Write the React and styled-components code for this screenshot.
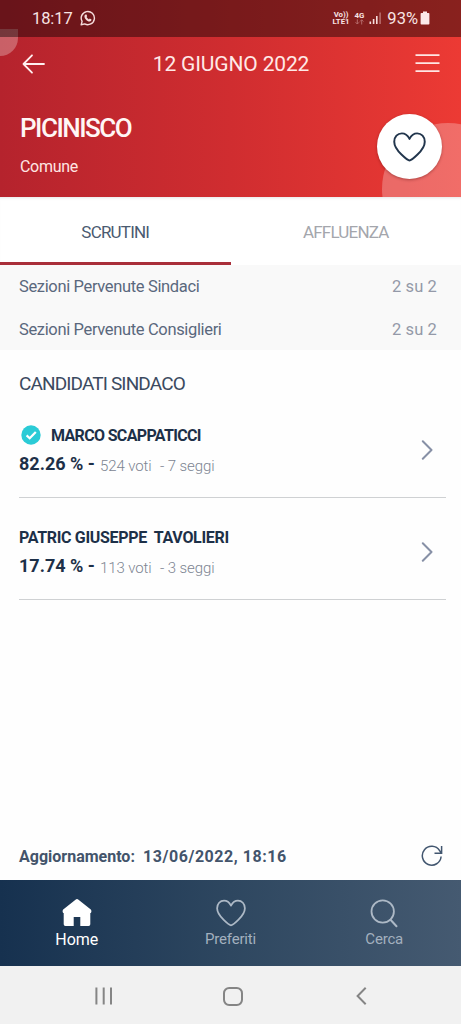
import React from "react";
import styled, { createGlobalStyle } from "styled-components";

const candidates = [
  {
    name: "MARCO SCAPPATICCI",
    percent: "82.26 % -",
    votes: "524 voti",
    seats: "- 7 seggi",
    elected: true,
  },
  {
    name: "PATRIC GIUSEPPE  TAVOLIERI",
    percent: "17.74 % -",
    votes: "113 voti",
    seats: "- 3 seggi",
    elected: false,
  },
];

const sections = [
  { label: "Sezioni Pervenute Sindaci", value: "2 su 2" },
  { label: "Sezioni Pervenute Consiglieri", value: "2 su 2" },
];

const HeartIcon = ({ width, height, stroke }) => (
  <svg width={width} height={height} viewBox="0 0 32 29" fill="none">
    <path
      d="M16 27.6C15 27.6 1.2 18.2 1.2 9.4C1.2 4.6 4.4 1.3 8.6 1.3C12 1.3 14.2 3.2 16 6.6C17.8 3.2 20 1.3 23.4 1.3C27.6 1.3 30.8 4.6 30.8 9.4C30.8 18.2 17 27.6 16 27.6Z"
      stroke={stroke}
      strokeWidth="1.9"
      strokeLinejoin="round"
    />
  </svg>
);

const WhatsappIcon = () => (
  <svg width="16" height="16" viewBox="0 0 16 16" fill="none">
    <path
      d="M1.2 14.8L2.1 11.4A6.6 6.6 0 1 1 4.7 13.9Z"
      stroke="#f6dcdc"
      strokeWidth="1.4"
      strokeLinejoin="round"
    />
    <path
      d="M5.5 4.4L6.5 4.5L7.2 6.2L6.5 7.1C7 8.1 7.8 8.9 8.9 9.4L9.8 8.6L11.5 9.5C11.5 10.8 10.6 11.6 9.5 11.5C7 11.2 4.6 8.7 4.4 6.4C4.4 5.5 4.8 4.8 5.5 4.4Z"
      fill="#f6dcdc"
    />
  </svg>
);

const SignalIcon = () => (
  <svg width="13" height="13" viewBox="0 0 13 13">
    <rect x="0.5" y="9.5" width="1.6" height="2.5" fill="#f6dcdc" />
    <rect x="3.8" y="7" width="1.6" height="5" fill="#f6dcdc" />
    <rect x="7" y="4" width="1.6" height="8" fill="#f6dcdc" />
    <rect x="10.3" y="0.5" width="1.6" height="11.5" fill="#b66c6c" />
  </svg>
);

const BatteryIcon = () => (
  <svg width="10" height="14" viewBox="0 0 10 14" fill="#fbeaea">
    <rect x="3" y="0.5" width="4" height="2" />
    <rect x="0.6" y="2" width="8.8" height="11.5" rx="0.8" />
  </svg>
);

const ArrowsIcon = () => (
  <svg width="9" height="6" viewBox="0 0 9 6" fill="none" stroke="#b66c6c">
    <path d="M2.3 0.3V5M0.6 3.3L2.3 5L4 3.3M6.7 5.5V0.8M5 2.5L6.7 0.8L8.4 2.5" />
  </svg>
);

const BackIcon = () => (
  <svg width="24" height="20" viewBox="0 0 24 20" fill="none">
    <path
      d="M10 1.3L1.5 10L10 18.7M1.5 10H22"
      stroke="#fff0f0"
      strokeWidth="1.8"
      strokeLinecap="round"
      strokeLinejoin="round"
    />
  </svg>
);

const MenuIcon = () => (
  <svg width="25" height="20" viewBox="0 0 25 20">
    <path d="M0.5 1.2H24.5M0.5 9.2H24.5M0.5 17.2H24.5" stroke="#ffe6e4" strokeWidth="1.8" />
  </svg>
);

const CheckIcon = () => (
  <svg width="20" height="20" viewBox="0 0 20 20" fill="none">
    <circle cx="10" cy="10" r="9.7" fill="#2bcbd6" />
    <path d="M5.6 10.4L8.7 13.3L14.8 6.9" stroke="#fff" strokeWidth="2.2" />
  </svg>
);

const ChevronIcon = () => (
  <svg width="12" height="20" viewBox="0 0 12 20" fill="none">
    <path
      d="M1.8 1.3L10.5 10L1.8 18.7"
      stroke="#8790a6"
      strokeWidth="2"
      strokeLinecap="round"
      strokeLinejoin="round"
    />
  </svg>
);

const RefreshIcon = () => (
  <svg width="22" height="22" viewBox="0 0 22 22" fill="none">
    <path
      d="M20.1 11.5A9.4 9.4 0 1 1 18.6 5.6L20.3 8.2M20.6 1V8.3H13.5"
      stroke="#42566f"
      strokeWidth="1.5"
    />
  </svg>
);

const HomeIcon = () => (
  <svg width="30" height="28" viewBox="0 0 30 28" fill="#fff">
    <path d="M13.5 0.7Q15 -0.5 16.5 0.7L28.8 10.5Q30 12 28.8 14H28.3V25.3Q28.3 27 26.6 27H18.3V18H11.7V27H3.4Q1.7 27 1.7 25.3V14H1.2Q0 12 1.2 10.5Z" />
  </svg>
);

const SearchIcon = () => (
  <svg width="28" height="29" viewBox="0 0 28 29" fill="none">
    <circle cx="12.7" cy="12.5" r="11.2" stroke="#adb9c6" strokeWidth="1.8" />
    <path d="M20.5 20.7L26.5 27.2" stroke="#adb9c6" strokeWidth="2" strokeLinecap="round" />
  </svg>
);

const RecentsIcon = () => (
  <svg width="18" height="18" viewBox="0 0 18 18">
    <path d="M1.4 0.5V17.5M8.7 0.5V17.5M16 0.5V17.5" stroke="#858585" strokeWidth="2" />
  </svg>
);

const CircleHomeIcon = () => (
  <svg width="20" height="19" viewBox="0 0 20 19" fill="none">
    <rect x="1" y="1" width="18" height="17" rx="5.2" stroke="#858585" strokeWidth="2" />
  </svg>
);

const NavBackIcon = () => (
  <svg width="11" height="18" viewBox="0 0 11 18" fill="none">
    <path d="M9.7 0.8L1.6 9L9.7 17.2" stroke="#858585" strokeWidth="2" />
  </svg>
);

const App = () => {
  return (
    <Screen>
      <GlobalStyle />
      <Header>
        <CornerShape />
        <BigCircle />
        <StatusBar>
          <Clock>18:17</Clock>
          <WhatsappIcon />
          <StatusRight>
            <Network>
              <span>Vo))</span>
              <span>LTE1</span>
            </Network>
            <Network>
              <span>4G</span>
              <ArrowsIcon />
            </Network>
            <SignalIcon />
            <Battery>
              93%
              <BatteryIcon />
            </Battery>
          </StatusRight>
        </StatusBar>
        <TitleBar>
          <BackIcon />
          <Title>12 GIUGNO 2022</Title>
          <MenuIcon />
        </TitleBar>
        <Place>
          <div>
            <Town>PICINISCO</Town>
            <Kind>Comune</Kind>
          </div>
          <Favourite>
            <HeartIcon width={33} height={30} stroke="#22364d" />
          </Favourite>
        </Place>
      </Header>
      <Tabs>
        <Tab $active>SCRUTINI</Tab>
        <Tab>AFFLUENZA</Tab>
      </Tabs>
      <Sections>
        {sections.map((section) => (
          <SectionRow key={section.label}>
            <span>{section.label}</span>
            <SectionValue>{section.value}</SectionValue>
          </SectionRow>
        ))}
      </Sections>
      <Content>
        <Heading>CANDIDATI SINDACO</Heading>
        {candidates.map((candidate) => (
          <Candidate key={candidate.name}>
            <div>
              <Name $elected={candidate.elected}>
                {candidate.elected && <CheckIcon />}
                {candidate.name}
              </Name>
              <Result>
                <Percent>{candidate.percent}</Percent>
                <Votes>{candidate.votes}</Votes>
                <Seats>{candidate.seats}</Seats>
              </Result>
            </div>
            <ChevronIcon />
          </Candidate>
        ))}
      </Content>
      <Update>
        <UpdateLabel>Aggiornamento:</UpdateLabel>
        <UpdateTime>13/06/2022, 18:16</UpdateTime>
        <RefreshIcon />
      </Update>
      <Footer>
        <FooterItem $active>
          <FooterIcon>
            <HomeIcon />
          </FooterIcon>
          Home
        </FooterItem>
        <FooterItem>
          <FooterIcon>
            <HeartIcon width={30} height={28} stroke="#adb9c6" />
          </FooterIcon>
          Preferiti
        </FooterItem>
        <FooterItem>
          <FooterIcon>
            <SearchIcon />
          </FooterIcon>
          Cerca
        </FooterItem>
      </Footer>
      <SystemNav>
        <RecentsIcon />
        <CircleHomeIcon />
        <NavBackIcon />
      </SystemNav>
    </Screen>
  );
};

export default App;

const GlobalStyle = createGlobalStyle`
  * {
    box-sizing: border-box;
  }
  body {
    margin: 0;
    background: #fff;
  }
  svg {
    display: block;
    flex-shrink: 0;
  }
`;

const Screen = styled.div`
  display: flex;
  flex-direction: column;
  width: 461px;
  height: 1024px;
  overflow: hidden;
  background: #fefefe;
  font-family: Roboto, "Liberation Sans", sans-serif;
`;

const Header = styled.header`
  position: relative;
  height: 197px;
  flex-shrink: 0;
  overflow: hidden;
  background: linear-gradient(90deg, #b5232d 0%, #d02d30 50%, #ec3a34 100%);
`;

const CornerShape = styled.div`
  position: absolute;
  top: 29px;
  left: 0;
  width: 18px;
  height: 27px;
  border-radius: 0 0 18px 0;
  background: rgba(255, 255, 255, 0.28);
`;

const BigCircle = styled.div`
  position: absolute;
  top: 123px;
  left: 382px;
  width: 132px;
  height: 132px;
  border-radius: 50%;
  background: rgba(255, 255, 255, 0.26);
`;

const StatusBar = styled.div`
  position: relative;
  display: flex;
  align-items: center;
  gap: 7px;
  height: 37px;
  padding: 0 31px 1px 32px;
  background: rgba(0, 0, 0, 0.42);
  color: #f8e4e4;
`;

const Clock = styled.span`
  font-size: 16.5px;
  letter-spacing: -0.1px;
`;

const StatusRight = styled.div`
  display: flex;
  align-items: center;
  gap: 5px;
  margin-left: auto;
`;

const Network = styled.div`
  display: flex;
  flex-direction: column;
  align-items: center;
  font-size: 7.8px;
  font-weight: 700;
  line-height: 7px;
`;

const Battery = styled.div`
  display: flex;
  align-items: center;
  gap: 2px;
  font-size: 16.5px;
`;

const TitleBar = styled.div`
  position: relative;
  display: flex;
  align-items: center;
  justify-content: space-between;
  height: 53px;
  padding: 0 21px 0 22px;
`;

const Title = styled.h1`
  margin: 0;
  padding-left: 1px;
  font-size: 21px;
  font-weight: 400;
  letter-spacing: -0.15px;
  color: #ffe9e7;
`;

const Place = styled.div`
  position: relative;
  display: flex;
  justify-content: space-between;
  padding: 24px 19px 0 20px;
`;

const Town = styled.h2`
  margin: 0;
  font-size: 26px;
  font-weight: 500;
  line-height: 29px;
  letter-spacing: -1.5px;
  color: #fff6f5;
`;

const Kind = styled.p`
  margin: 14px 0 0;
  font-size: 16px;
  line-height: 20px;
  letter-spacing: -0.3px;
  color: #ffe5e3;
`;

const Favourite = styled.button`
  display: grid;
  place-items: center;
  width: 65px;
  height: 65px;
  padding: 0;
  border: 0;
  border-radius: 50%;
  background: #fff;
  box-shadow: 0 1px 3px rgba(60, 0, 0, 0.35);
`;

const Tabs = styled.div`
  display: flex;
  height: 68px;
  flex-shrink: 0;
  background: #fff;
  box-shadow: inset 0 3px 3px -2px rgba(0, 0, 0, 0.1);
`;

const Tab = styled.div`
  display: grid;
  place-items: center;
  flex: 1;
  padding-top: 4px;
  border-bottom: 3px solid ${(props) => (props.$active ? "#a92f3a" : "#fff")};
  font-size: 17px;
  letter-spacing: -0.8px;
  color: ${(props) => (props.$active ? "#4a5a70" : "#a4a6ac")};
`;

const Sections = styled.div`
  height: 85px;
  flex-shrink: 0;
  background: #f9f9f9;
`;

const SectionRow = styled.div`
  display: flex;
  align-items: center;
  justify-content: space-between;
  height: 43px;
  padding: 0 24px 0 19px;
  font-size: 16.5px;
  letter-spacing: -0.35px;
  color: #5a687d;
`;

const SectionValue = styled.span`
  letter-spacing: 0.1px;
  color: #9499a8;
`;

const Content = styled.main`
  display: flex;
  flex-direction: column;
  flex: 1;
  padding: 22px 15px 0 19px;
`;

const Heading = styled.h3`
  margin: 0;
  font-size: 19px;
  font-weight: 400;
  line-height: 24px;
  letter-spacing: -0.87px;
  color: #3b4a60;
`;

const Candidate = styled.div`
  display: flex;
  align-items: center;
  justify-content: space-between;
  height: 102px;
  padding: 6px 13px 0 0;
  border-bottom: 1px solid #cfd1d3;
`;

const Name = styled.div`
  display: flex;
  align-items: center;
  gap: 10px;
  height: 22px;
  padding-left: ${(props) => (props.$elected ? "2px" : "0")};
  font-size: 16px;
  font-weight: 700;
  letter-spacing: ${(props) => (props.$elected ? "-0.66px" : "-0.32px")};
  white-space: pre;
  color: #1d3048;
`;

const Result = styled.div`
  display: flex;
  align-items: center;
  height: 24px;
  margin-top: 5px;
`;

const Percent = styled.span`
  width: 81px;
  font-size: 18px;
  font-weight: 700;
  color: #1d3048;
`;

const Votes = styled.span`
  width: 60px;
  padding-top: 5px;
  font-size: 15px;
  font-weight: 300;
  letter-spacing: -0.1px;
  color: #7c8491;
`;

const Seats = styled(Votes)`
  width: auto;
`;

const Update = styled.div`
  display: flex;
  align-items: center;
  height: 48px;
  flex-shrink: 0;
  padding: 0 18px 0 19px;
  font-size: 16px;
  font-weight: 700;
  color: #43546b;

  svg {
    margin-left: auto;
  }
`;

const UpdateLabel = styled.span`
  width: 124px;
`;

const UpdateTime = styled.span`
  letter-spacing: 0.55px;
`;

const Footer = styled.footer`
  display: flex;
  height: 86px;
  flex-shrink: 0;
  background: linear-gradient(90deg, #16314f 0%, #2e4760 50%, #455a71 100%);
`;

const FooterItem = styled.div`
  display: flex;
  flex-direction: column;
  align-items: center;
  flex: 1;
  padding-top: 18px;
  font-size: ${(props) => (props.$active ? "16px" : "15px")};
  line-height: 23px;
  letter-spacing: ${(props) => (props.$active ? "0" : "-0.2px")};
  color: ${(props) => (props.$active ? "#fff" : "#a3b0be")};
`;

const FooterIcon = styled.div`
  display: grid;
  place-items: center;
  height: 30px;
`;

const SystemNav = styled.nav`
  display: flex;
  align-items: center;
  justify-content: space-between;
  height: 58px;
  flex-shrink: 0;
  padding: 2px 94px 0 95px;
  background: #f1f1f1;

  svg:nth-child(2) {
    margin-right: 4px;
  }
`;
